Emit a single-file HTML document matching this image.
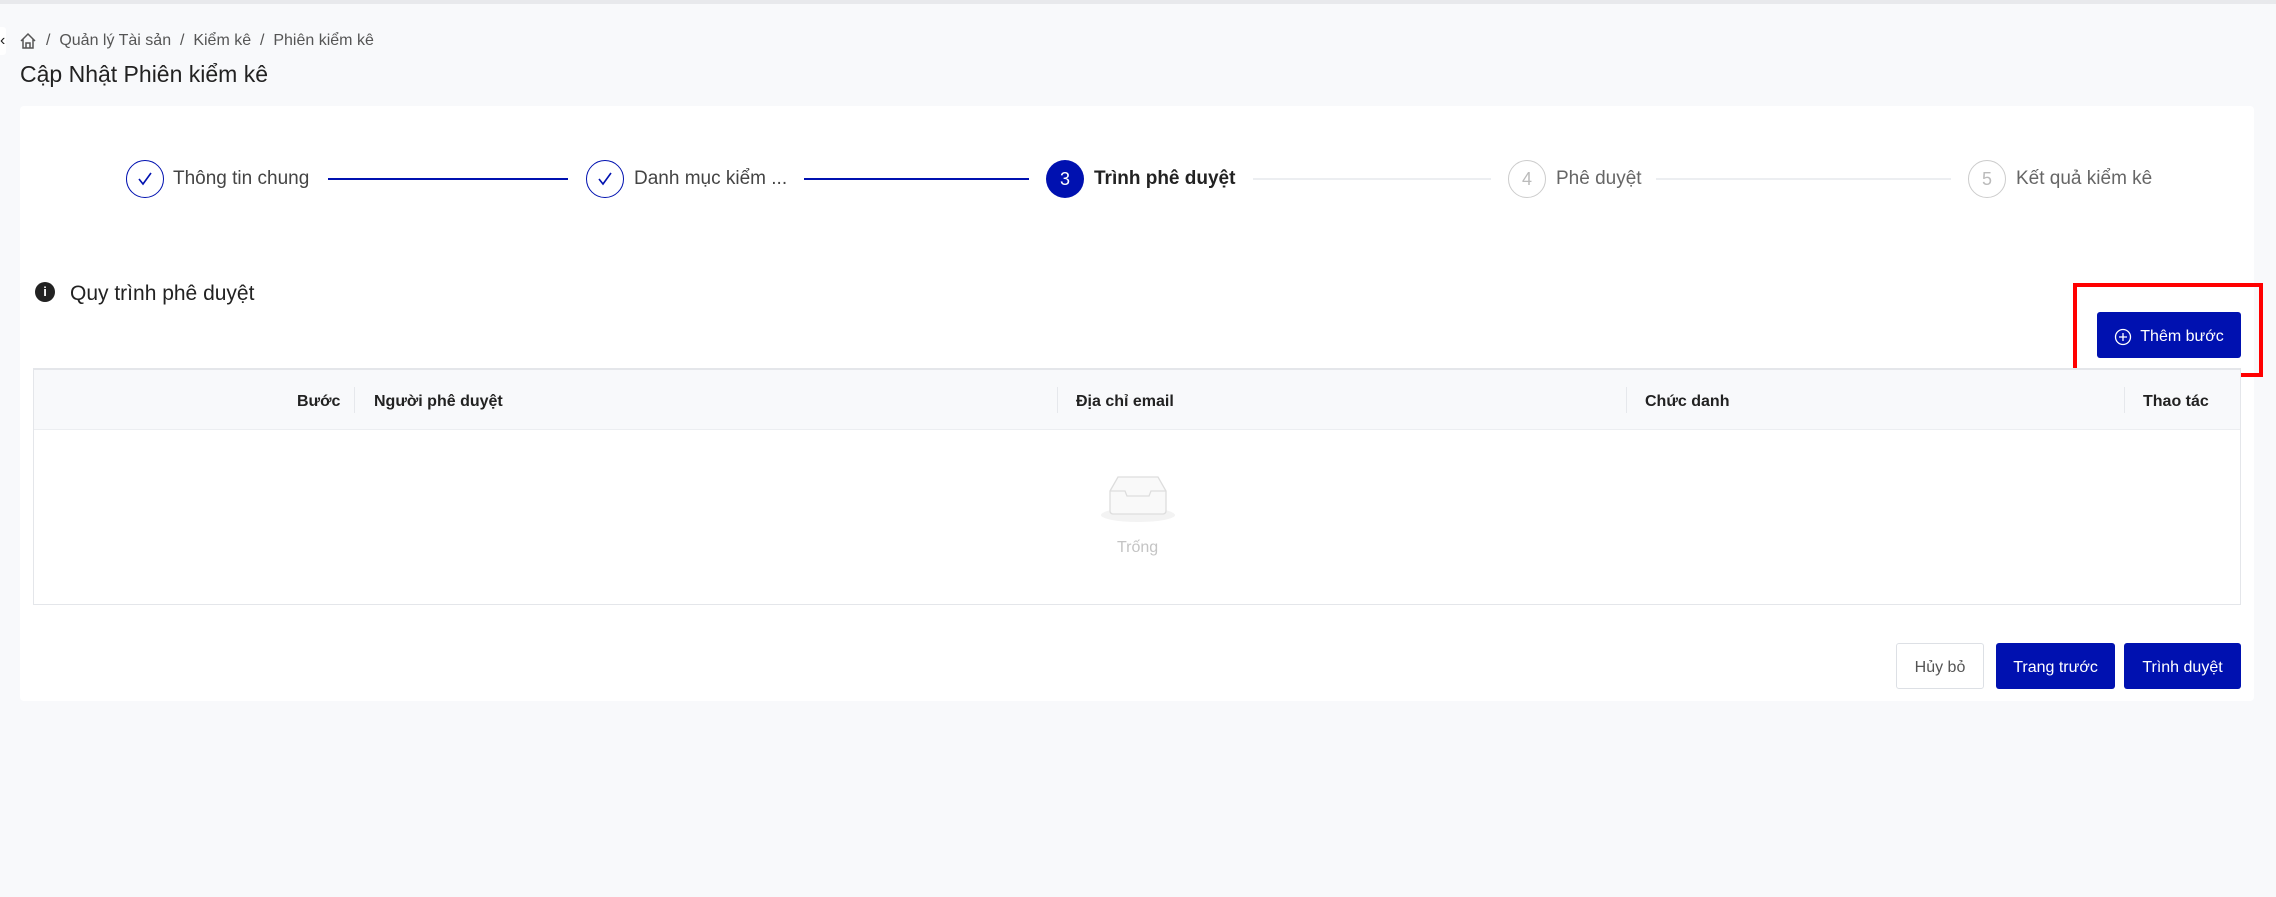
<!DOCTYPE html><html><head><meta charset="utf-8"><style>
*{box-sizing:border-box;margin:0;padding:0}
body{width:2276px;height:897px;background:#f8f9fb;font-family:"Liberation Sans",sans-serif;position:relative;overflow:hidden;color:#222}
.a{position:absolute;white-space:nowrap}
.circ{position:absolute;width:38px;height:38px;border-radius:50%;display:flex;align-items:center;justify-content:center;font-size:18px}
.line{position:absolute;height:2px;top:178px}
.st{position:absolute;top:167px;font-size:19px;line-height:24px}
.th{position:absolute;top:393px;font-size:16px;font-weight:bold;color:#222}
.dv{position:absolute;top:387px;width:1px;height:26px;background:#e6e8ec}
.btn{position:absolute;top:643px;height:46px;border-radius:3px;display:flex;align-items:center;justify-content:center;font-size:16px;color:#fff;background:#0011b0;padding-top:3px}
</style></head><body>
<div class="a" style="left:0;top:0;width:2276px;height:4px;background:#e8e9ec"></div>
<div class="a" style="left:0;top:27px;width:6px;height:28px;background:#fff;border-radius:0 3px 3px 0;font-size:16px;line-height:28px;overflow:hidden">‹</div>
<svg class="a" style="left:19px;top:32px" width="18" height="18" viewBox="0 0 18 18" fill="none" stroke="#555" stroke-width="1.5"><path d="M2 9L9 2l7 7M4 7v9h10V7M7 16v-5h4v5"/></svg>
<div class="a" style="left:46px;top:32px;font-size:16px;color:#555">/&nbsp; Quản lý Tài sản &nbsp;/&nbsp; Kiểm kê &nbsp;/&nbsp; Phiên kiểm kê</div>
<div class="a" style="left:20px;top:61px;font-size:23px;color:#222">Cập Nhật Phiên kiểm kê</div>
<div class="a" style="left:20px;top:106px;width:2234px;height:595px;background:#fff;border-radius:4px"></div>

<div class="circ" style="left:126px;top:160px;border:1.5px solid #0011b0;color:#0011b0"><svg width="18" height="18" viewBox="0 0 18 18"><path d="M3 9l4 5 8-11" fill="none" stroke="#0011b0" stroke-width="1.6"/></svg></div>
<div class="st" style="left:173px;color:#444">Thông tin chung</div>
<div class="line" style="left:328px;width:240px;background:#0011b0"></div>
<div class="circ" style="left:586px;top:160px;border:1.5px solid #0011b0"><svg width="18" height="18" viewBox="0 0 18 18"><path d="M3 9l4 5 8-11" fill="none" stroke="#0011b0" stroke-width="1.6"/></svg></div>
<div class="st" style="left:634px;color:#444">Danh mục kiểm ...</div>
<div class="line" style="left:804px;width:225px;background:#0011b0"></div>
<div class="circ" style="left:1046px;top:160px;background:#0011b0;color:#fff">3</div>
<div class="st" style="left:1094px;font-weight:bold;color:#222">Trình phê duyệt</div>
<div class="line" style="left:1253px;width:238px;background:#eceef1"></div>
<div class="circ" style="left:1508px;top:160px;border:1.5px solid #ccc;color:#bbb">4</div>
<div class="st" style="left:1556px;color:#666">Phê duyệt</div>
<div class="line" style="left:1656px;width:295px;background:#eceef1"></div>
<div class="circ" style="left:1968px;top:160px;border:1.5px solid #ccc;color:#bbb">5</div>
<div class="st" style="left:2016px;color:#666">Kết quả kiểm kê</div>

<div class="a" style="left:35px;top:282px;width:20px;height:20px;border-radius:50%;background:#222;color:#fff;font-size:13px;font-weight:bold;text-align:center;line-height:20px">i</div>
<div class="a" style="left:70px;top:282px;font-size:21px;color:#222">Quy trình phê duyệt</div>

<div class="a" style="left:2073px;top:283px;width:190px;height:94px;border:4px solid #f00"></div>
<div class="btn" style="left:2097px;top:312px;width:144px;height:46px;gap:8px"><svg width="18" height="18" viewBox="0 0 18 18" fill="none" stroke="#fff" stroke-width="1.3"><circle cx="9" cy="9" r="7.5"/><path d="M9 5v8M5 9h8"/></svg>Thêm bước</div>

<div class="a" style="left:33px;top:368px;width:2208px;height:237px;border:1px solid #e4e6ea;border-top:2px solid #e4e6ea"></div>
<div class="a" style="left:34px;top:370px;width:2206px;height:60px;background:#f8f9fb;border-bottom:1px solid #eceef1"></div>
<div class="th" style="left:297px">Bước</div>
<div class="dv" style="left:354px"></div>
<div class="th" style="left:374px">Người phê duyệt</div>
<div class="dv" style="left:1057px"></div>
<div class="th" style="left:1076px">Địa chỉ email</div>
<div class="dv" style="left:1626px"></div>
<div class="th" style="left:1645px">Chức danh</div>
<div class="dv" style="left:2124px"></div>
<div class="th" style="left:2143px">Thao tác</div>

<svg class="a" style="left:1098px;top:474px" width="80" height="50" viewBox="0 0 80 50"><ellipse cx="40" cy="41" rx="37" ry="7" fill="#f3f3f3"/><path d="M12 17L20 3h40l8 14v20a3 3 0 0 1-3 3H15a3 3 0 0 1-3-3z" fill="#f9f9f9" stroke="#ddd" stroke-width="1.3"/><path d="M12 17h15l2 5h22l2-5h15" fill="none" stroke="#ddd" stroke-width="1.3"/></svg>
<div class="a" style="left:1117px;top:539px;font-size:16px;color:#c4c4c4">Trống</div>

<div class="btn" style="left:1896px;width:88px;background:#fff;border:1px solid #dde0e5;color:#555">Hủy bỏ</div>
<div class="btn" style="left:1996px;width:119px">Trang trước</div>
<div class="btn" style="left:2124px;width:117px">Trình duyệt</div>
</body></html>
